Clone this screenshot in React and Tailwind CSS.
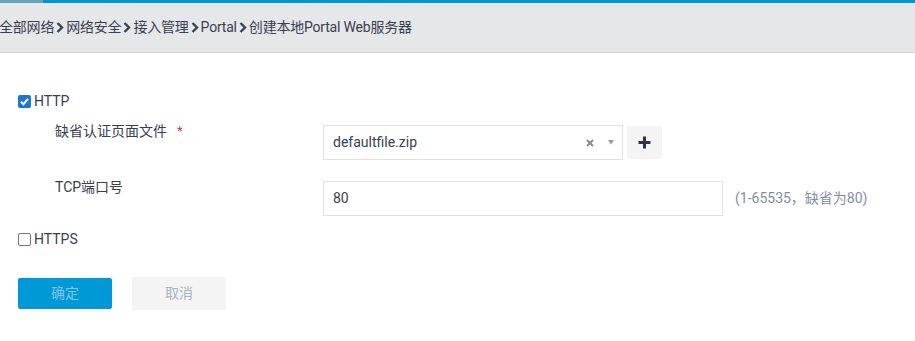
import React from "react";

const FONT = { fontFamily: '"Roboto", "Noto Sans CJK SC", sans-serif' };

function Chevron() {
  return (
    <svg width="8" height="11" viewBox="0 0 8 11" className="mx-[2px] shrink-0">
      <path d="M1.5 1 L6 5.5 L1.5 10" fill="none" stroke="#3a4250" strokeWidth="2.4" />
    </svg>
  );
}

function Check({ checked }) {
  if (checked) {
    return (
      <span className="w-[13px] h-[13px] rounded-[2px] bg-[#1a78d2] flex items-center justify-center">
        <svg width="11" height="11" viewBox="0 0 11 11">
          <path d="M2 5.8 L4.4 8.2 L9 2.8" fill="none" stroke="#fff" strokeWidth="2" />
        </svg>
      </span>
    );
  }
  return <span className="w-[13px] h-[13px] rounded-[2px] border border-[#777] bg-white box-border" />;
}

export default function App() {
  return (
    <div className="w-[915px] h-[341px] bg-white text-[14px] text-[#384050] overflow-hidden" style={FONT}>
      <div className="flex h-[3px]">
        <div className="w-[43px] bg-[#68a2c0]" />
        <div className="flex-1 bg-[#0096d6]" />
      </div>
      <div className="h-[50px] bg-[#e6e7e8] border-b border-[#d4d4d4] flex items-center -ml-[1px] tracking-[-0.2px]">
        <span>全部网络</span>
        <Chevron />
        <span>网络安全</span>
        <Chevron />
        <span>接入管理</span>
        <Chevron />
        <span>Portal</span>
        <Chevron />
        <span>创建本地Portal Web服务器</span>
      </div>

      <div className="pl-[18px] pt-[42px]">
        <div className="flex items-center h-[13px] gap-[3px]">
          <Check checked />
          <span className="leading-[13px]">HTTP</span>
        </div>

        <div className="flex items-start mt-[13px]">
          <div className="w-[305px] pl-[37px] leading-[20px] flex">
            <span>缺省认证页面文件</span>
            <span className="text-[#e0303a] ml-[10px] text-[13px]">*</span>
          </div>
          <div className="mt-[4px] flex items-start">
            <div className="w-[300px] h-[35px] border border-[#e2e2e2] flex items-center pl-[9px] pr-[8px] box-border">
              <span className="flex-1">defaultfile.zip</span>
              <svg width="8" height="8" viewBox="0 0 8 8">
                <path d="M1 1 L7 7 M7 1 L1 7" stroke="#8a8a8a" strokeWidth="2" />
              </svg>
              <svg width="6" height="5" viewBox="0 0 6 5" className="ml-[14px]">
                <path d="M0 0 H6 L3 4.5 Z" fill="#9a9a9a" />
              </svg>
            </div>
            <div className="ml-[4px] mt-[1px] w-[35px] h-[33px] bg-[#f4f4f4] flex items-center justify-center">
              <svg width="13" height="13" viewBox="0 0 13 13">
                <path d="M6.5 0.5 V12.5 M0.5 6.5 H12.5" stroke="#2b3547" strokeWidth="3" />
              </svg>
            </div>
          </div>
        </div>

        <div className="flex items-start mt-[17px]">
          <div className="w-[305px] pl-[37px] leading-[20px]">TCP端口号</div>
          <div className="mt-[4px] flex items-center">
            <div className="w-[400px] h-[35px] border border-[#e2e2e2] flex items-center pl-[9px] box-border">80</div>
            <span className="ml-[12px] text-[#7f90a5]">(1-65535，缺省为80)</span>
          </div>
        </div>

        <div className="flex items-center h-[13px] gap-[3px] mt-[17px]">
          <Check />
          <span className="leading-[13px]">HTTPS</span>
        </div>

        <div className="flex items-center gap-[20px] mt-[31px]">
          <div className="w-[94px] h-[31px] rounded-[2px] bg-[#0099d8] text-[#80c6e8] flex items-center justify-center">确定</div>
          <div className="w-[94px] h-[33px] rounded-[2px] bg-[#f4f4f4] text-[#aab4bf] flex items-center justify-center">取消</div>
        </div>
      </div>
    </div>
  );
}
